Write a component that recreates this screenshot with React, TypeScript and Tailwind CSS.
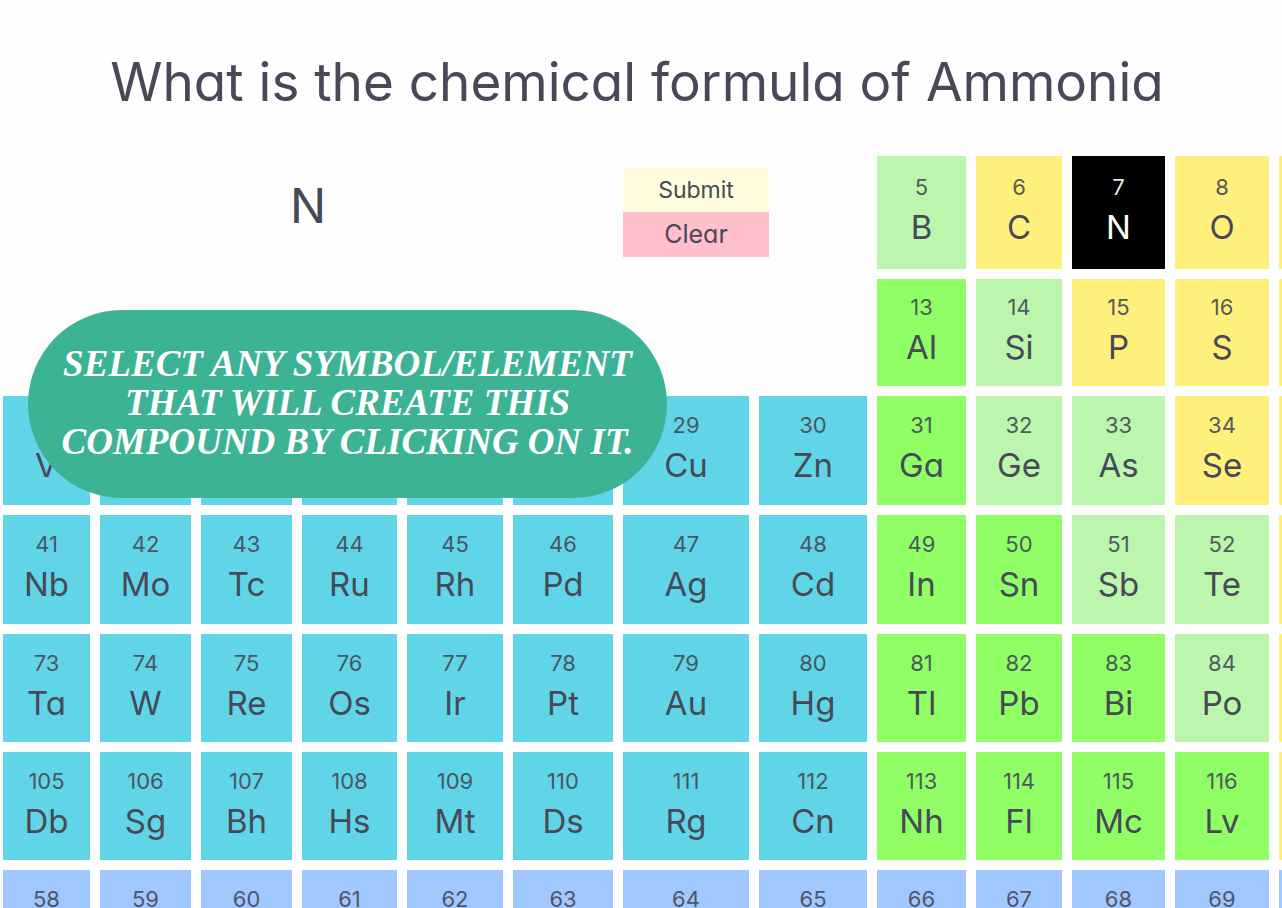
import { useState } from "react";

type Kind = "transition" | "metal" | "metalloid" | "nonmetal" | "lanthanide";

interface Element {
  number: number;
  symbol: string;
  kind: Kind;
}

const kindClass: Record<Kind, string> = {
  transition: "bg-[#60d5e8]",
  metal: "bg-[#90ff66]",
  metalloid: "bg-[#bcf6ac]",
  nonmetal: "bg-[#fff07c]",
  lanthanide: "bg-[#a0c8ff]",
};

function row(kinds: string, first: number, symbols: string): Element[] {
  const lookup: Record<string, Kind> = {
    t: "transition",
    m: "metal",
    o: "metalloid",
    n: "nonmetal",
    l: "lanthanide",
  };
  return symbols.split(" ").map((symbol, i) => ({
    number: first + i,
    symbol,
    kind: lookup[kinds[i]],
  }));
}

const upperRows: Element[] = [
  ...row("onnnn", 5, "B C N O F"),
  ...row("monnn", 13, "Al Si P S Cl"),
];

const lowerRows: Element[] = [
  ...row("ttttttttmoonn", 23, "V Cr Mn Fe Co Ni Cu Zn Ga Ge As Se Br"),
  ...row("ttttttttmmoon", 41, "Nb Mo Tc Ru Rh Pd Ag Cd In Sn Sb Te I"),
  ...row("ttttttttmmmon", 73, "Ta W Re Os Ir Pt Au Hg Tl Pb Bi Po At"),
  ...row("ttttttttmmmmn", 105, "Db Sg Bh Hs Mt Ds Rg Cn Nh Fl Mc Lv Ts"),
  ...row("lllllllllllll", 58, "Ce Pr Nd Pm Sm Eu Gd Tb Dy Ho Er Tm Yb"),
];

function Cell({
  element,
  selected,
  onSelect,
}: {
  element: Element;
  selected: boolean;
  onSelect: (symbol: string) => void;
}) {
  return (
    <button
      type="button"
      onClick={() => onSelect(element.symbol)}
      className={`flex flex-col items-center justify-center pb-px ${
        selected ? "bg-black text-white" : `${kindClass[element.kind]} text-[#474958]`
      }`}
    >
      <span className="text-[22px] leading-[30px] opacity-90">{element.number}</span>
      <span className="text-[33px] leading-[50px]">{element.symbol}</span>
    </button>
  );
}

export default function App() {
  const [answer, setAnswer] = useState<string[]>(["N"]);
  const add = (symbol: string) => setAnswer((current) => [...current, symbol]);
  const renderCell = (element: Element) => (
    <Cell
      key={element.number}
      element={element}
      selected={answer.includes(element.symbol)}
      onSelect={add}
    />
  );

  return (
    <main className="relative h-screen overflow-hidden bg-[#fefefe] font-['Inter',sans-serif] text-[#474958] [font-feature-settings:'cv11']">
      <h1 className="mb-9 pt-11 pr-2 text-center text-[53px] leading-[76px] whitespace-nowrap">
        What is the chemical formula of Ammonia
      </h1>

      <div className="grid w-[calc(100%+91px)] grid-cols-[87fr_91fr_91fr_95fr_96fr_100fr_126fr_108fr_89fr_86fr_93fr_94fr_94fr] grid-rows-[113px_107px_109px_109px_108px_108px_108px] gap-[10px] pl-[3px]">
        <output className="col-span-6 row-span-2 pt-5 text-center text-[48px] leading-[60px]">
          {answer.join("")}
        </output>
        <div className="col-span-2 row-span-2 flex flex-col items-start pt-3">
          <button type="button" className="h-11 w-[146px] bg-[#fffddd] text-[23px]">
            Submit
          </button>
          <button
            type="button"
            onClick={() => setAnswer([])}
            className="h-[45px] w-[146px] bg-[#ffbfcb] text-[25px]"
          >
            Clear
          </button>
        </div>
        {upperRows.map(renderCell)}
        {lowerRows.map(renderCell)}
      </div>

      <p className="absolute top-[310px] left-7 flex h-[188px] w-[639px] items-center justify-center rounded-full bg-[#3bb394] pb-1 text-center font-['Liberation_Serif',serif] text-[37px] leading-[39px] font-bold text-white italic">
        <span>
          SELECT ANY SYMBOL/ELEMENT
          <br />
          THAT WILL CREATE THIS
          <br />
          COMPOUND BY CLICKING ON IT.
        </span>
      </p>
    </main>
  );
}
